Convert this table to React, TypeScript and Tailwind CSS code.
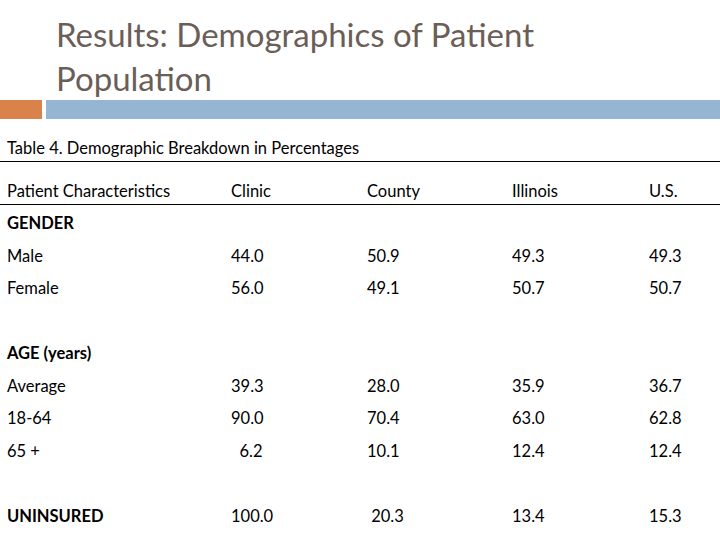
const rows: { label: string; bold?: boolean; values?: string[] }[] = [
  { label: 'GENDER', bold: true },
  { label: 'Male', values: ['44.0', '50.9', '49.3', '49.3'] },
  { label: 'Female', values: ['56.0', '49.1', '50.7', '50.7'] },
  { label: '' },
  { label: 'AGE (years)', bold: true },
  { label: 'Average', values: ['39.3', '28.0', '35.9', '36.7'] },
  { label: '18-64', values: ['90.0', '70.4', '63.0', '62.8'] },
  { label: '65 +', values: ['\u00a0\u00a06.2', '10.1', '12.4', '12.4'] },
  { label: '' },
  { label: 'UNINSURED', bold: true, values: ['100.0', '\u00a020.3', '13.4', '15.3'] },
]

const cols = 'grid grid-cols-[224px_136px_145px_137px_1fr] pl-[7px]'

export default function App() {
  return (
    <div className="w-[720px] h-[540px] bg-white overflow-hidden font-['Lato',sans-serif] text-black">
      <div className="pl-[56px] pt-[13px] text-[33px] leading-[43.5px] text-[#6a5e57]">
        Results: Demographics of Patient
        <br />
        Population
      </div>
      <div className="flex gap-[4px] h-[19px]">
        <div className="w-[42px] bg-[#d9834a]" />
        <div className="flex-1 bg-[#94b6d3]" />
      </div>

      <div className="mt-[17px] text-[16.5px] leading-[24px]">
        <div className="pl-[7px] pb-[1px] border-b border-black">
          Table 4. Demographic Breakdown in Percentages
        </div>
        <div className={`${cols} mt-[17px] pb-[1px] border-b border-black`}>
          <div>Patient Characteristics</div>
          <div>Clinic</div>
          <div>County</div>
          <div>Illinois</div>
          <div>U.S.</div>
        </div>
        <div className="mt-[2px]">
          {rows.map((r, i) => (
            <div key={i} className={`${cols} h-[32.5px] leading-[32.5px]`}>
              <div className={r.bold ? 'font-bold' : ''}>{r.label}</div>
              {r.values?.map((v, j) => (
                <div key={j} className="whitespace-pre">{v}</div>
              ))}
            </div>
          ))}
        </div>
      </div>
    </div>
  )
}
